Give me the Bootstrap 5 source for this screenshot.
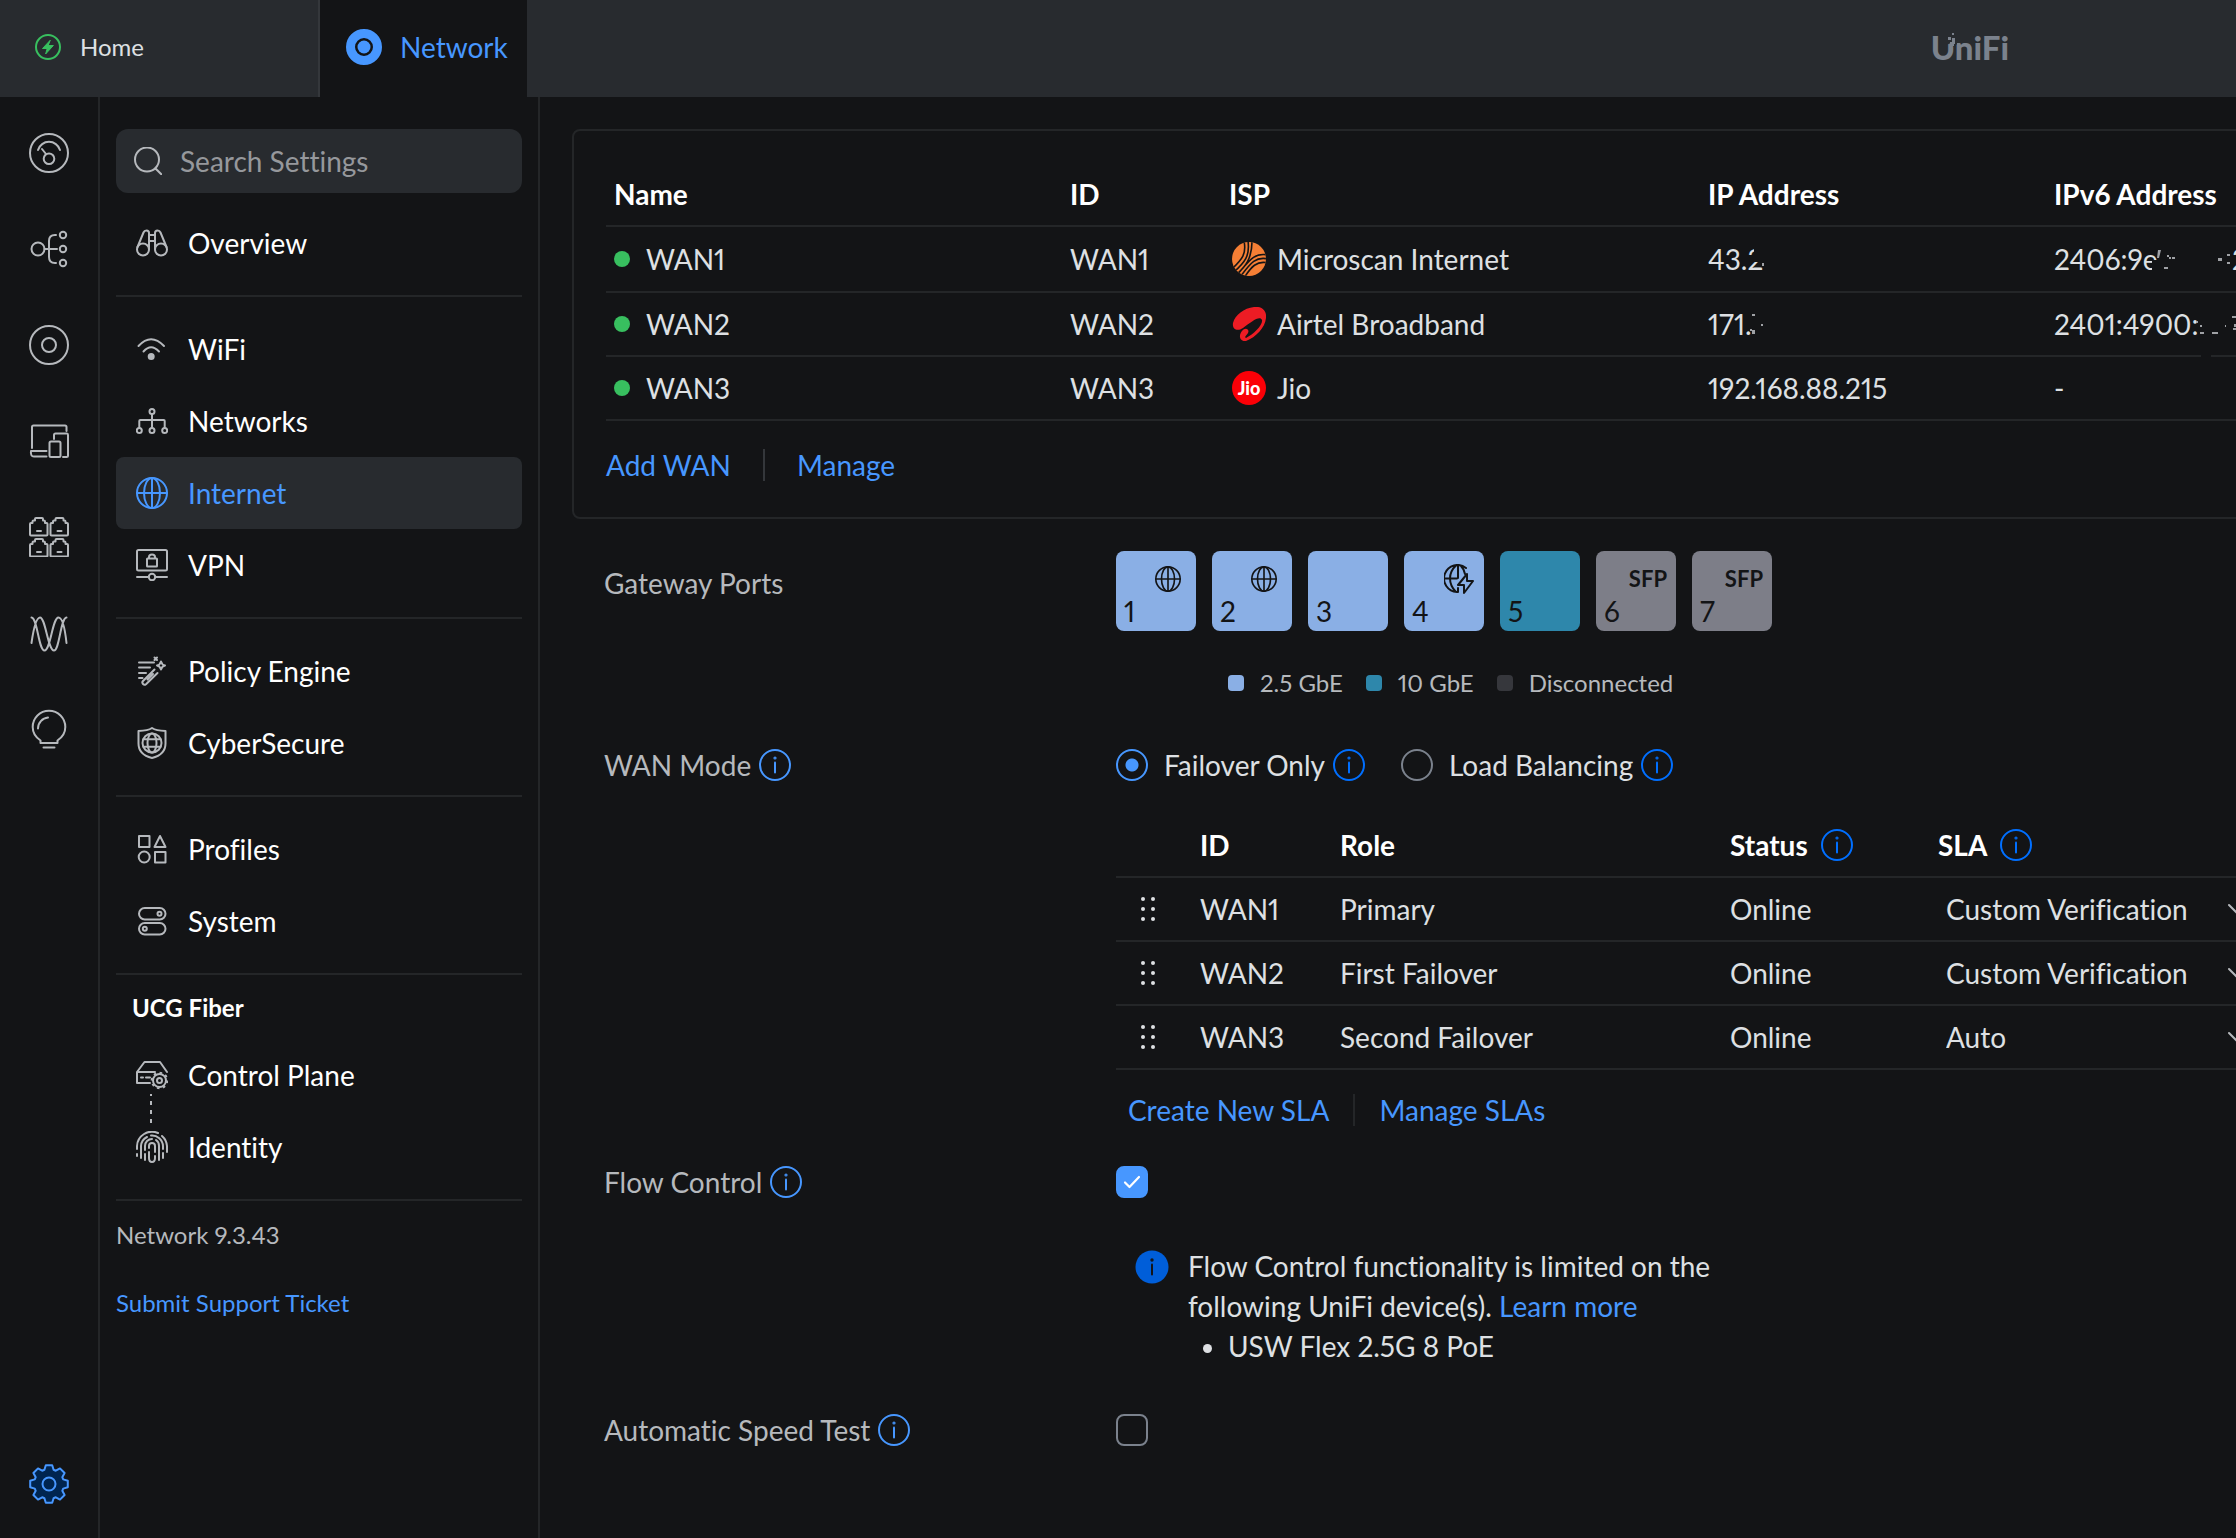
<!DOCTYPE html>
<html lang="en" data-bs-theme="dark">
<head>
<meta charset="utf-8">
<meta name="viewport" content="width=device-width, initial-scale=1">
<title>UniFi Network - Internet Settings</title>
<link href="https://cdn.jsdelivr.net/npm/bootstrap@5.3.0/dist/css/bootstrap.min.css" rel="stylesheet">
<style>
:root{--bg:#131416;--panel:#282b2f;--line:#242628;--text:#dee0e3;--muted:#b6b9bd;--blue:#4797ff;--deep:#006fff}
body{background:var(--bg);color:var(--text);font-family:Lato,"Open Sans",sans-serif;font-size:28px;line-height:40px;overflow-x:hidden}
body,button,input,select{font-variant-ligatures:none;font-variant-numeric:proportional-nums}
a{color:var(--blue);text-decoration:none}
svg{display:block;flex:none;fill:none;stroke:currentColor;stroke-width:2;stroke-linejoin:round;stroke-linecap:round}
.topbar{height:97px;background:var(--panel)}
.home-tab,.net-tab,.brand{padding-bottom:3px}
.home-tab{width:320px;padding-left:35px;gap:19px;border-right:2px solid #34373b;font-size:24px;color:var(--text)}
.net-tab{width:207px;padding-left:26px;gap:18px;background:var(--bg)}
.brand{position:relative;margin-right:227px;font-weight:900;font-size:33px;color:#7b828d}
.brand svg{position:absolute;left:15px;top:33px;stroke:none}
.shell{min-height:calc(100vh - 97px)}
.rail{width:100px;flex:none;border-right:2px solid var(--line);padding:36px 0 34px;gap:56px;color:var(--muted)}
.rail a{color:inherit}
.rail a.current{color:var(--blue)}
.side{width:440px;flex:none;border-right:2px solid var(--line);padding:32px 16px 0}
.search-box{height:64px;background:var(--panel);border-radius:12px;padding:0 18px;gap:18px;color:var(--muted);margin-bottom:14px}
.search-box input{background:none;border:0;outline:0;color:var(--text);min-width:0;flex:1;padding:0}
.search-box input::placeholder{color:#96989c;opacity:1}
.side-link{height:72px;padding:0 20px;gap:20px;border-radius:8px;color:#fff}
.side-link svg{color:var(--muted)}
.side-link.active{background:var(--panel);color:var(--blue)}
.side-link.active svg{color:inherit}
.rule{border-top:2px solid var(--line);margin:16px 0}
.side-title{font-size:24px;font-weight:700;color:#fff;line-height:34px;padding:0 16px 14px;margin:0}
.small-line{font-size:24px;line-height:36px}
.soft{color:var(--muted)}
.linked{position:relative}
.linked::after{content:"";position:absolute;left:34px;top:55px;height:29px;width:2px;background:repeating-linear-gradient(var(--muted) 0 4px,transparent 4px 9px) 0 -2px}
.main-pane{min-width:0;overflow:hidden;padding:32px 0 88px 32px}
.bleed{min-width:1752px}
.wan-card{border:2px solid var(--line);border-radius:8px;padding:32px 32px 36px}
.grid-table{--bs-table-bg:transparent;--bs-table-color:var(--text);table-layout:fixed;border-collapse:separate;border-spacing:0;margin:0}
.grid-table th,.grid-table td{height:64px;padding:0 8px;border:0;border-bottom:2px solid var(--line);vertical-align:middle;white-space:nowrap}
.grid-table th{color:#fff;font-weight:700}
.grid-table .first-row td{height:66px}
.th-info{gap:13px}
.dot{width:16px;height:16px;border-radius:50%;background:#38bf5f;flex:none}
.isp-cell{padding-left:3px;gap:11px}
.isp-icon{width:34px;height:34px;stroke:none}
.jio-badge{width:34px;height:34px;border-radius:50%;background:#fb0007;color:#fff;font-size:18px;font-weight:900;flex:none}
.masked{position:relative;display:inline-block}
.masked svg{position:absolute;left:0;top:0;stroke:none;overflow:visible}
.hide-part{fill:var(--bg)}
.speck{fill:#9fa1a5}
.tail{position:absolute;left:178px;top:0}
.link-row{height:32px;line-height:32px}
.wan-card .link-row{margin-top:28px}
.sep{width:2px;height:32px;background:#34373b}
.sep.dim{background:var(--line)}
.setting{padding-left:32px}
.setting-name{width:512px;flex:none;color:var(--muted);gap:8px;line-height:32px}
.port{width:80px;height:80px;border:0;border-radius:8px;background:#8aafe5;color:#131416;position:relative;padding:0}
.port b{position:absolute;left:8px;bottom:0;font-weight:400}
.port svg{position:absolute;right:15px;top:15px}
.port svg.backup{right:10px;top:13px}
.port span{position:absolute;right:9px;top:8px;font-size:22px;font-weight:700}
.port.ten{background:#2e87ab}
.port.off{background:#7d7e88}
.legend-row{padding:34px 0 0 112px;gap:23px;font-size:24px;line-height:36px;color:var(--muted)}
.swatch{width:16px;height:16px;border-radius:4px;background:#8aafe5;margin-right:16px}
.swatch.ten{background:#2e87ab}
.swatch.off{background:#36373c}
.mode-row{height:32px}
.mode-row svg{margin:0 36px 0 8px}
.form-check-input.pick{width:32px;height:32px;margin:0;float:none;background-color:transparent;border:2px solid #7b828d;flex:none}
.form-check-input.pick[type=checkbox]{border-radius:8px}
.form-check-input.pick[type=checkbox]:checked{background-color:var(--blue);border-color:var(--blue);background-image:url("data:image/svg+xml,%3Csvg xmlns='http://www.w3.org/2000/svg' viewBox='0 0 28 28'%3E%3Cpath fill='none' stroke='%23fff' stroke-width='2.200' stroke-linecap='round' stroke-linejoin='round' d='M7 14.500l4.500 4.500L21 9'/%3E%3C/svg%3E")}
.form-check-input.pick[type=radio]:checked{border-color:var(--blue);background-image:radial-gradient(circle,var(--blue) 0 6px,transparent 7px)}
.deep{color:var(--deep)}
.bright{color:var(--blue)}
.sla-table{margin-top:33px}
.sla-select{appearance:none;background:none;border:0;color:var(--text);width:282px;padding:0;flex:none}
.sla-new{padding:0 24px 0 12px}
.note{width:640px;padding:0 20px 0 19px;gap:19px}
.note ul{padding-left:40px;margin:0}
</style>
</head>
<body>
<svg width="0" height="0" class="position-absolute" aria-hidden="true">
  <symbol id="info" viewBox="0 0 32 32"><circle cx="16" cy="16" r="15"/><path d="M16 13.500v10" /><circle cx="16" cy="9" r=".6"/></symbol>
  <symbol id="globe" viewBox="0 0 32 32"><circle cx="16" cy="16" r="15"/><ellipse cx="16" cy="16" rx="8" ry="15"/><path d="M16 1v30M1 16h30"/></symbol>
  <symbol id="grip" viewBox="0 0 16 26"><g fill="currentColor" stroke="none"><circle cx="3" cy="3" r="2"/><circle cx="13" cy="3" r="2"/><circle cx="3" cy="13" r="2"/><circle cx="13" cy="13" r="2"/><circle cx="3" cy="23" r="2"/><circle cx="13" cy="23" r="2"/></g></symbol>
</svg>

<header class="topbar d-flex align-items-stretch">
  <a href="#" class="home-tab d-flex align-items-center">
    <svg width="26" height="26" viewBox="0 0 26 26" style="color:#38bf5f"><circle cx="13" cy="13" r="12"/><path d="M15 6.500 7.500 14.500h4.700l-1.600 5.500 7.800-8.500h-4.900z" fill="currentColor" stroke-width="1"/></svg>
    Home
  </a>
  <a href="#" class="net-tab d-flex align-items-center">
    <svg width="36" height="36" viewBox="0 0 36 36"><circle cx="18" cy="18" r="13.500" stroke-width="9"/><circle cx="18" cy="18" r="6.500" fill="currentColor" stroke="none"/></svg>
    Network
  </a>
  <div class="brand ms-auto d-flex align-items-center"><span>UniFi</span>
    <svg width="11" height="16" viewBox="0 0 11 16"><path d="M0 0h11v11l-3 3-3-4-5 2z" fill="#282b2f"/><path d="M4 9h4v4H4zM2 4h3v3H2zM6 5h3v6H6zM6 0h2v2H6z" fill="#7b828d"/></svg>
  </div>
</header>

<div class="shell d-flex align-items-stretch">
  <nav class="rail d-flex flex-column align-items-center" aria-label="Sections">
    <a href="#" aria-label="Dashboard"><svg width="40" height="40"><circle cx="20" cy="20" r="19"/><path d="M9 17A11.500 11.500 0 0 1 31 17M13 16l4 5"/><circle cx="20" cy="25.700" r="5.300"/></svg></a>
    <a href="#" aria-label="Topology"><svg width="40" height="40"><circle cx="9" cy="20" r="6.500"/><circle cx="34" cy="6" r="3.200"/><circle cx="34" cy="20" r="3.200"/><circle cx="34" cy="34" r="3.200"/><path d="M15.500 20H28M27 6h-1q-6 0-6 6v16q0 6 6 6h1"/></svg></a>
    <a href="#" aria-label="Devices"><svg width="40" height="40"><circle cx="20" cy="20" r="19"/><circle cx="20" cy="20" r="7"/></svg></a>
    <a href="#" aria-label="Clients"><svg width="40" height="40"><path d="M3 27V6q0-1.500 1.500-1.500H36q1.500 0 1.500 1.500v4M25 18v-4q0-1.500 1.500-1.500H38q1 0 1 1.500v20.500q0 1.500-1.500 1.500H34M17.500 30H2q-.8 5.500 3 5.500h12.500"/><rect x="20.500" y="20.500" width="11" height="15.500" rx="1.500"/></svg></a>
    <a href="#" aria-label="Ports"><svg width="40" height="40"><g id="jack"><path d="M2 18.500q-1 0-1-1V7q0-1 1-1h1.500V4.500q0-1 1-1H6V2q0-1 1-1h6q1 0 1 1v1.500h1q1 0 1 1V6h1.500q1 0 1 1v10.500q0 1-1 1zM8 14h4"/></g><use href="#jack" x="20.500"/><use href="#jack" y="21"/><use href="#jack" x="20.500" y="21"/></svg></a>
    <a href="#" aria-label="Radios"><svg width="40" height="40"><path d="M2.500 30C4.500 16 7 4.500 11 4.500C16.500 4.500 19 37.500 25 37.500C30.500 37.500 31.500 5 37.500 4.500M2.500 4.500C8.500 5 9.500 37.500 15.500 37.500C21.500 37.500 23.500 4.500 29.500 4.500C33.500 4.500 36 16 37.500 30"/></svg></a>
    <a href="#" aria-label="Insights"><svg width="40" height="40"><path d="M11.500 34v-2.500C8.500 29.500 3.700 25 3.700 18A16.300 16.300 0 0 1 36.300 18C36.300 25 31.500 29.500 28.500 31.500V34zM14.500 38.500h11M9 19.500A11 11 0 0 1 19 8.500"/></svg></a>
    <a href="#" class="current mt-auto" aria-label="Settings"><svg width="40" height="40" viewBox="-20 -20 40 40"><path fill="#002550" d="M14.200-4.600 18.800-3.200V3.200L14.200 4.600 13.300 6.800 15.600 11 11 15.600 6.800 13.300 4.600 14.200 3.200 18.800H-3.200L-4.600 14.200-6.800 13.300-11 15.600-15.600 11-13.300 6.800-14.200 4.600-18.800 3.200V-3.200L-14.200-4.600-13.300-6.800-15.600-11-11-15.600-6.800-13.300-4.600-14.200-3.200-18.800H3.200L4.600-14.200 6.800-13.300 11-15.600 15.600-11 13.300-6.800z"/><circle r="6.500"/></svg></a>
  </nav>

  <aside class="side">
    <label class="search-box d-flex align-items-center">
      <svg width="28" height="28"><circle cx="13" cy="12.500" r="12"/><path d="M21.500 21.500l6 6"/></svg>
      <input type="search" placeholder="Search Settings" aria-label="Search Settings">
    </label>
    <nav aria-label="Settings">
      <a href="#" class="side-link d-flex align-items-center"><svg width="32" height="32"><circle cx="7" cy="22.500" r="6"/><circle cx="25" cy="22.500" r="6"/><path d="M1.500 20 7.500 5.500q.8-2 3-2 2.500 0 2.500 2.500v16.500M30.500 20 24.500 5.500q-.8-2-3-2-2.500 0-2.500 2.500v16.500M13 8h6M13 14h6"/></svg>Overview</a>
      <div class="rule"></div>
      <a href="#" class="side-link d-flex align-items-center"><svg width="32" height="32"><path d="M2.500 13Q15-.5 28 13M7.500 18.500q7.500-8.500 15.500 0"/><circle cx="15.200" cy="23.500" r="2.500" fill="currentColor"/></svg>WiFi</a>
      <a href="#" class="side-link d-flex align-items-center"><svg width="32" height="32"><circle cx="16" cy="6.500" r="2.500"/><circle cx="3.300" cy="25.500" r="2.500"/><circle cx="16" cy="25.500" r="2.500"/><circle cx="28.700" cy="25.500" r="2.500"/><path d="M16 9v14M3.300 23v-7q0-1 1-1h23.400q1 0 1 1v7"/></svg>Networks</a>
      <a href="#" class="side-link active d-flex align-items-center" aria-current="page"><svg width="32" height="32"><use href="#globe"/></svg>Internet</a>
      <a href="#" class="side-link d-flex align-items-center"><svg width="32" height="32"><rect x="1" y="1" width="30" height="20.500" rx="1.500"/><rect x="11" y="9.500" width="10" height="8" rx=".5"/><path d="M13 9V8q0-2.500 3-2.500T19 8v1M1 28h11.500M19.500 28H31"/><circle cx="16" cy="28" r="3.200"/></svg>VPN</a>
      <div class="rule"></div>
      <a href="#" class="side-link d-flex align-items-center"><svg width="32" height="32"><path d="M3 7.500h15M3 12.500h11M3 18h7M3 23h3.500M18.500 14.500 7 26a2.200 2.200 0 0 0 3 3.200L21.500 18M11.500 24.500 17 19M25 6.500q1 3.500 4 4-3 .5-4 4-1-3.500-4-4 3-.5 4-4M18.500 2.500 21 5M21 2.500 18.500 5"/></svg>Policy Engine</a>
      <a href="#" class="side-link d-flex align-items-center"><svg width="32" height="32"><path d="M16 1q-4 2.700-13.500 3v12.500C2.500 24.500 8 29 16 31c8-2 13.500-6.500 13.500-14.500V4Q20 3.700 16 1z"/><circle cx="16" cy="16" r="9.500"/><ellipse cx="16" cy="16" rx="4.500" ry="9.500"/><path d="M7.500 12.300h17M7.500 19.700h17"/></svg>CyberSecure</a>
      <div class="rule"></div>
      <a href="#" class="side-link d-flex align-items-center"><svg width="32" height="32"><rect x="3" y="3" width="10.500" height="11"/><path d="M24 3l5.500 11h-11z"/><circle cx="8.200" cy="24" r="5.500"/><rect x="19" y="19" width="10.500" height="10.500"/></svg>Profiles</a>
      <a href="#" class="side-link d-flex align-items-center"><svg width="32" height="32"><rect x="3" y="3" width="26.500" height="11.500" rx="5.700"/><rect x="3" y="18" width="26.500" height="11.500" rx="5.700"/><circle cx="23.500" cy="8.700" r="2"/><circle cx="8.800" cy="23.700" r="2"/></svg>System</a>
      <div class="rule"></div>
      <h2 class="side-title">UCG Fiber</h2>
      <a href="#" class="side-link linked d-flex align-items-center"><svg width="32" height="32"><path d="M19 13H1l7.500-10H24l7 10M1 13v11h13M5 18.500h2M10 18.500h4" /><circle cx="23.500" cy="21.500" r="2.500"/><circle cx="23.500" cy="21.500" r="6.500"/><circle cx="23.500" cy="21.500" r="7.800" stroke-dasharray="2.500 3.600" stroke-linecap="butt"/></svg>Control Plane</a>
      <a href="#" class="side-link d-flex align-items-center"><svg width="32" height="32"><path d="M1 18v-3A15 15 0 0 1 22 2M26 5a15 15 0 0 1 5 10v6M1 23v2M5 27V15A11 11 0 0 1 11 6M15 4.500A11 11 0 0 1 27 15v3M27 22v5M9 29v-6M9 19v-4a7 7 0 0 1 7-7M20 9a7 7 0 0 1 3 6v14M13 17v-2q0-3 3-3t3 3v6M13 21v6q0 4 3 4t3-4v-2"/></svg>Identity</a>
      <div class="rule mb-0"></div>
    </nav>
    <div class="small-line soft mt-3">Network 9.3.43</div>
    <div class="small-line mt-4 pt-2"><a href="#">Submit Support Ticket</a></div>
  </aside>

  <main class="main-pane flex-grow-1">
    <div class="bleed">
      <section class="wan-card">
        <table class="table grid-table">
          <colgroup><col style="width:456px"><col style="width:159px"><col style="width:479px"><col style="width:346px"><col></colgroup>
          <thead><tr><th scope="col">Name</th><th scope="col">ID</th><th scope="col">ISP</th><th scope="col">IP Address</th><th scope="col">IPv6 Address</th></tr></thead>
          <tbody>
            <tr class="first-row">
              <td><div class="d-flex align-items-center gap-3"><span class="dot"></span>WAN1</div></td><td>WAN1</td>
              <td><div class="isp-cell d-flex align-items-center"><svg class="isp-icon" viewBox="0 1 34 34"><defs><clipPath id="disc"><circle cx="17" cy="18" r="17"/></clipPath></defs><g clip-path="url(#disc)"><path d="M0 0h36v36H0z" fill="#f57f35"/><path d="M-1 29C9 19 15 14 12 0M2 31C13 21 18 15 16 0M5 33C13 26 20 18 20 0M5 34C17 20 22 11 36 14M8 36C18 23 23 15 36 18M12 37C19 26 25 19 36 22" fill="none" stroke="#131416" stroke-width="1.600"/></g></svg>Microscan Internet</div></td>
              <td><span class="masked">43.2<svg width="60" height="40"><path class="hide-part" d="M46 8h12v15H46zM36 16h12v7H36z"/><path class="speck" d="M54 24h2v3h-2z"/></svg></span></td>
              <td><span class="masked">2406:9e<svg width="180" height="40"><path class="hide-part" d="M98 21h6v11h-6z"/><path class="speck" d="M104 11h3l-2 8h-2zM113 16h2v2h-2zM115 18h2v2h-2zM118 18h3v2h-3zM110 28h4v2h-4zM164 19h4v3h-4zM173 15h3v2h-3zM173 23h3v2h-3z"/></svg><span class="tail">2</span></span></td>
            </tr>
            <tr>
              <td><div class="d-flex align-items-center gap-3"><span class="dot"></span>WAN2</div></td><td>WAN2</td>
              <td><div class="isp-cell d-flex align-items-center"><svg class="isp-icon" viewBox="0 1 34 34"><path fill="#ed1c24" d="M22 1C29 0 35 4 34 12C33 22 24 31 14 35C8 36 6 30 10 25C13 21 18 23 16 27C14 30 12 31 14 32C22 28 31 19 30 14C28 9 19 16 11 22C5 26 0 23 1 17C3 9 12 2 22 1Z"/></svg>Airtel Broadband</div></td>
              <td><span class="masked">171.<svg width="60" height="40"><path class="speck" d="M44 10h3v2h-3zM44 26h3v4h-3zM42 25h2v2h-2zM53 20h2v2h-2z"/></svg></span></td>
              <td><span class="masked">2401:4900:<svg width="182" height="60"><path class="speck" d="M142 17h2v2h-2zM146 21h2v2h-2zM146 28h4v2h-4zM158 28h6v2h-6zM171 21h1v2h-1zM178 12h4v2h-4zM180 20h3v3h-3zM179 24h3v2h-3z"/><path class="hide-part" d="M147 50h10v6h-10z"/></svg></span></td>
            </tr>
            <tr>
              <td><div class="d-flex align-items-center gap-3"><span class="dot"></span>WAN3</div></td><td>WAN3</td>
              <td><div class="isp-cell d-flex align-items-center"><span class="jio-badge d-flex align-items-center justify-content-center">Jio</span>Jio</div></td>
              <td>192.168.88.215</td><td>-</td>
            </tr>
          </tbody>
        </table>
        <div class="link-row d-flex align-items-center"><a href="#" class="pe-4 me-2">Add WAN</a><span class="sep"></span><a href="#" class="ps-4 ms-2">Manage</a></div>
      </section>

      <section class="setting d-flex mt-3 pt-3">
        <div class="setting-name pt-3">Gateway Ports</div>
        <div>
          <div class="d-flex gap-3">
            <button class="port"><svg width="26" height="26"><use href="#globe"/></svg><b>1</b></button>
            <button class="port"><svg width="26" height="26"><use href="#globe"/></svg><b>2</b></button>
            <button class="port"><b>3</b></button>
            <button class="port"><svg class="backup" width="30" height="30"><path d="M13 28A13.500 13.500 0 1 1 22 4M14 1v13M1 14.500h12M12 28Q6 22 6 14.500T12 1.500M17 2q3 3 4 8M14 24v4M23 10l-9 11h6v8l9-12h-6z"/></svg><b>4</b></button>
            <button class="port ten"><b>5</b></button>
            <button class="port off"><span>SFP</span><b>6</b></button>
            <button class="port off"><span>SFP</span><b>7</b></button>
          </div>
          <div class="legend-row d-flex align-items-center"><div class="d-flex align-items-center"><span class="swatch"></span>2.5 GbE</div><div class="d-flex align-items-center"><span class="swatch ten"></span>10 GbE</div><div class="d-flex align-items-center"><span class="swatch off"></span>Disconnected</div></div>
        </div>
      </section>

      <section class="setting d-flex mt-5">
        <div class="setting-name d-flex">WAN Mode<svg class="bright" width="32" height="32"><use href="#info"/></svg></div>
        <div class="flex-grow-1">
          <div class="mode-row d-flex align-items-center">
            <input class="form-check-input pick me-3" type="radio" name="mode" id="failover" checked><label for="failover">Failover Only</label><svg class="deep" width="32" height="32"><use href="#info"/></svg>
            <input class="form-check-input pick me-3" type="radio" name="mode" id="balance"><label for="balance">Load Balancing</label><svg class="deep" width="32" height="32"><use href="#info"/></svg>
          </div>
          <table class="table grid-table sla-table">
            <colgroup><col style="width:76px"><col style="width:140px"><col style="width:390px"><col style="width:208px"><col></colgroup>
            <thead><tr><th></th><th scope="col">ID</th><th scope="col">Role</th><th scope="col"><div class="th-info d-flex align-items-center">Status<svg class="deep" width="32" height="32"><use href="#info"/></svg></div></th><th scope="col"><div class="th-info d-flex align-items-center">SLA<svg class="deep" width="32" height="32"><use href="#info"/></svg></div></th></tr></thead>
            <tbody>
              <tr><td class="ps-4"><svg width="16" height="26"><use href="#grip"/></svg></td><td>WAN1</td><td>Primary</td><td>Online</td><td><div class="d-flex align-items-center ps-2"><select class="sla-select" aria-label="WAN1 SLA"><option>Custom Verification</option><option>Auto</option></select><svg class="soft" width="18" height="12"><path d="M1 2l8 8 8-8"/></svg></div></td></tr>
              <tr><td class="ps-4"><svg width="16" height="26"><use href="#grip"/></svg></td><td>WAN2</td><td>First Failover</td><td>Online</td><td><div class="d-flex align-items-center ps-2"><select class="sla-select" aria-label="WAN2 SLA"><option>Custom Verification</option><option>Auto</option></select><svg class="soft" width="18" height="12"><path d="M1 2l8 8 8-8"/></svg></div></td></tr>
              <tr><td class="ps-4"><svg width="16" height="26"><use href="#grip"/></svg></td><td>WAN3</td><td>Second Failover</td><td>Online</td><td><div class="d-flex align-items-center ps-2"><select class="sla-select" aria-label="WAN3 SLA"><option>Auto</option><option>Custom Verification</option></select><svg class="soft" width="18" height="12"><path d="M1 2l8 8 8-8"/></svg></div></td></tr>
            </tbody>
          </table>
          <div class="link-row d-flex align-items-center mt-4"><a href="#" class="sla-new">Create New SLA</a><span class="sep dim"></span><a href="#" class="ps-4">Manage SLAs</a></div>
        </div>
      </section>

      <section class="setting d-flex mt-4 pt-3">
        <label class="setting-name d-flex" for="flow">Flow Control<svg class="bright" width="32" height="32"><use href="#info"/></svg></label>
        <div>
          <input class="form-check-input pick d-block" type="checkbox" id="flow" checked>
          <div class="note d-flex mt-5">
            <svg class="mt-1" width="34" height="34" viewBox="0 0 34 34"><circle cx="17" cy="17" r="16.500" fill="#005ed9" stroke="none"/><path d="M17 14.500v10" stroke="#131416"/><circle cx="17" cy="10" r=".7" stroke="#131416"/></svg>
            <div>Flow Control functionality is limited on the following UniFi device(s). <a href="#">Learn more</a><ul><li>USW Flex 2.5G 8 PoE</li></ul></div>
          </div>
        </div>
      </section>

      <section class="setting d-flex mt-5">
        <label class="setting-name d-flex" for="speed">Automatic Speed Test<svg class="bright" width="32" height="32"><use href="#info"/></svg></label>
        <input class="form-check-input pick" type="checkbox" id="speed">
      </section>
    </div>
  </main>
</div>
<script src="https://cdn.jsdelivr.net/npm/bootstrap@5.3.0/dist/js/bootstrap.bundle.min.js"></script>
</body>
</html>
